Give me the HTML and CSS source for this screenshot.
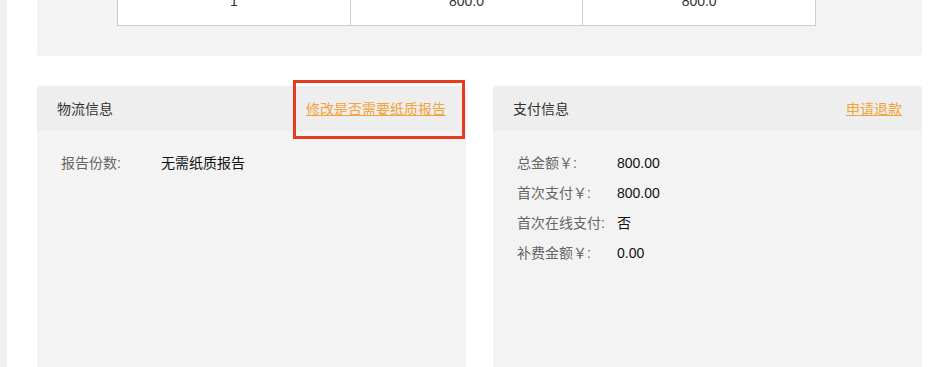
FILE: index.html
```html
<!DOCTYPE html>
<html lang="zh-CN">
<head>
    <meta charset="UTF-8">
    <meta name="viewport" content="width=device-width, initial-scale=1.0">
    <title>订单详情</title>
    <link rel="stylesheet" href="styles.css">
</head>
<body>
    <div class="page-edge"></div>
    <div class="main">
        <div class="card top-card">
            <table class="price-table">
                <tr>
                    <td>1</td>
                    <td>800.0</td>
                    <td>800.0</td>
                </tr>
            </table>
        </div>

        <div class="info-row">
            <div class="info-box">
                <div class="info-head">
                    <span class="info-title">物流信息</span>
                    <span class="link-wrap">
                        <a href="#" class="info-link">修改是否需要纸质报告</a>
                        <span class="highlight"></span>
                    </span>
                </div>
                <div class="info-body">
                    <div class="info-item">
                        <span class="label">报告份数:</span>
                        <span class="value">无需纸质报告</span>
                    </div>
                </div>
            </div>

            <div class="info-box">
                <div class="info-head">
                    <span class="info-title">支付信息</span>
                    <a href="#" class="info-link">申请退款</a>
                </div>
                <div class="info-body">
                    <div class="info-item">
                        <span class="label">总金额￥:</span>
                        <span class="value">800.00</span>
                    </div>
                    <div class="info-item">
                        <span class="label">首次支付￥:</span>
                        <span class="value">800.00</span>
                    </div>
                    <div class="info-item">
                        <span class="label">首次在线支付:</span>
                        <span class="value">否</span>
                    </div>
                    <div class="info-item">
                        <span class="label">补费金额￥:</span>
                        <span class="value">0.00</span>
                    </div>
                </div>
            </div>
        </div>
    </div>
</body>
</html>
```

FILE: styles.css
```css
body {
    font-family: "Liberation Sans", "Noto Sans CJK SC", sans-serif;
    font-size: 14px;
    background-color: #fff;
    margin: 0;
    padding: 0;
    display: flex;
    overflow: hidden;
    height: 367px;
}

.page-edge {
    width: 7px;
    flex-shrink: 0;
    background-color: #efefef;
}

.main {
    flex: 1;
    padding: 0 15px 0 30px;
    margin-top: -45px;
}

.card {
    background-color: #f3f3f3;
    border-radius: 4px;
}

.top-card {
    padding: 20px 0 30px 80px;
}

.price-table {
    width: 699px;
    border-collapse: collapse;
    background-color: #fff;
}

.price-table td {
    width: 33.3%;
    height: 49px;
    border: 1px solid #ccc;
    text-align: center;
    color: #333;
    padding: 0;
}

.info-row {
    display: flex;
    gap: 27px;
    margin-top: 30px;
}

.info-box {
    flex: 1;
    background-color: #f3f3f3;
    border-radius: 4px 4px 0 0;
}

.info-head {
    height: 43px;
    display: flex;
    align-items: center;
    justify-content: space-between;
    padding: 0 20px 2px;
    background-color: #eeeeee;
    border-radius: 4px 4px 0 0;
}

.info-title {
    color: #333;
}

.info-link {
    color: #f2a33a;
    text-decoration: underline;
}

.link-wrap {
    position: relative;
}

.highlight {
    position: absolute;
    left: -13px;
    right: -19px;
    top: -18px;
    bottom: -21px;
    border: 3px solid #e63b1f;
}

.info-body {
    padding: 17px 24px 0;
    min-height: 300px;
}

.info-item {
    display: flex;
    line-height: 30px;
}

.label {
    width: 100px;
    color: #666;
}

.value {
    color: #111;
}
```
